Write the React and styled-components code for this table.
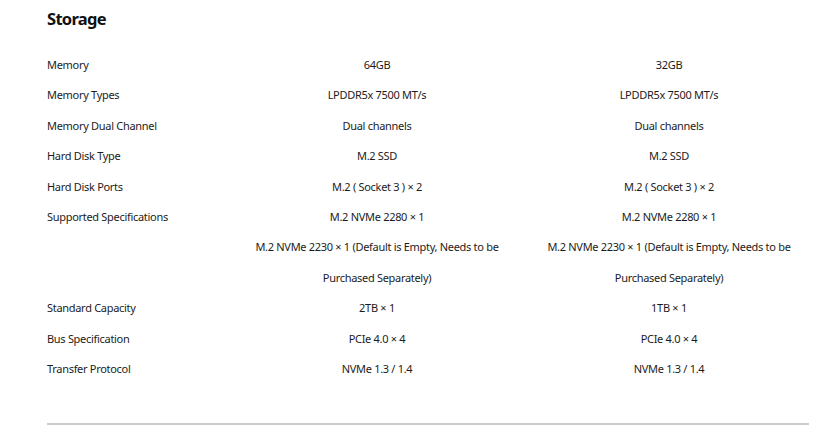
import React from "react";
import styled, { createGlobalStyle } from "styled-components";

const Global = createGlobalStyle`
  html, body { margin: 0; padding: 0; background: #fff; }
  body { font-family: "Noto Sans", "Open Sans", sans-serif; color: #1c1c1c; }
`;

const Page = styled.section`
  padding: 8px 0 0 47px;
`;

const Title = styled.h2`
  margin: 0;
  font-size: 16.5px;
  font-weight: 700;
  color: #111;
  line-height: 22px;
  letter-spacing: -0.7px;
`;

const Table = styled.div`
  margin-top: 20px;
  display: grid;
  grid-template-columns: 184px 292px 292px;
  font-size: 11px;
  line-height: 30.4px;
  letter-spacing: -0.3px;
`;

const Label = styled.div`
  text-align: left;
`;

const Value = styled.div`
  text-align: center;
  padding: 0 20px;
`;

const Divider = styled.hr`
  width: 762px;
  margin: 39px 0 0;
  border: none;
  border-top: 2px solid #cccccc;
`;

const rows = [
  ["Memory", "64GB", "32GB"],
  ["Memory Types", "LPDDR5x 7500 MT/s", "LPDDR5x 7500 MT/s"],
  ["Memory Dual Channel", "Dual channels", "Dual channels"],
  ["Hard Disk Type", "M.2 SSD", "M.2 SSD"],
  ["Hard Disk Ports", "M.2 ( Socket 3 ) × 2", "M.2 ( Socket 3 ) × 2"],
  ["Supported Specifications", "M.2 NVMe 2280 × 1", "M.2 NVMe 2280 × 1"],
  [
    "",
    "M.2 NVMe 2230 × 1 (Default is Empty, Needs to be Purchased Separately)",
    "M.2 NVMe 2230 × 1 (Default is Empty, Needs to be Purchased Separately)",
  ],
  ["Standard Capacity", "2TB × 1", "1TB × 1"],
  ["Bus Specification", "PCIe 4.0 × 4", "PCIe 4.0 × 4"],
  ["Transfer Protocol", "NVMe 1.3 / 1.4", "NVMe 1.3 / 1.4"],
];

export default function App() {
  return (
    <>
      <Global />
      <Page>
        <Title>Storage</Title>
        <Table>
          {rows.map(([l, a, b], i) => (
            <React.Fragment key={i}>
              <Label>{l}</Label>
              <Value>{a}</Value>
              <Value>{b}</Value>
            </React.Fragment>
          ))}
        </Table>
        <Divider />
      </Page>
    </>
  );
}
